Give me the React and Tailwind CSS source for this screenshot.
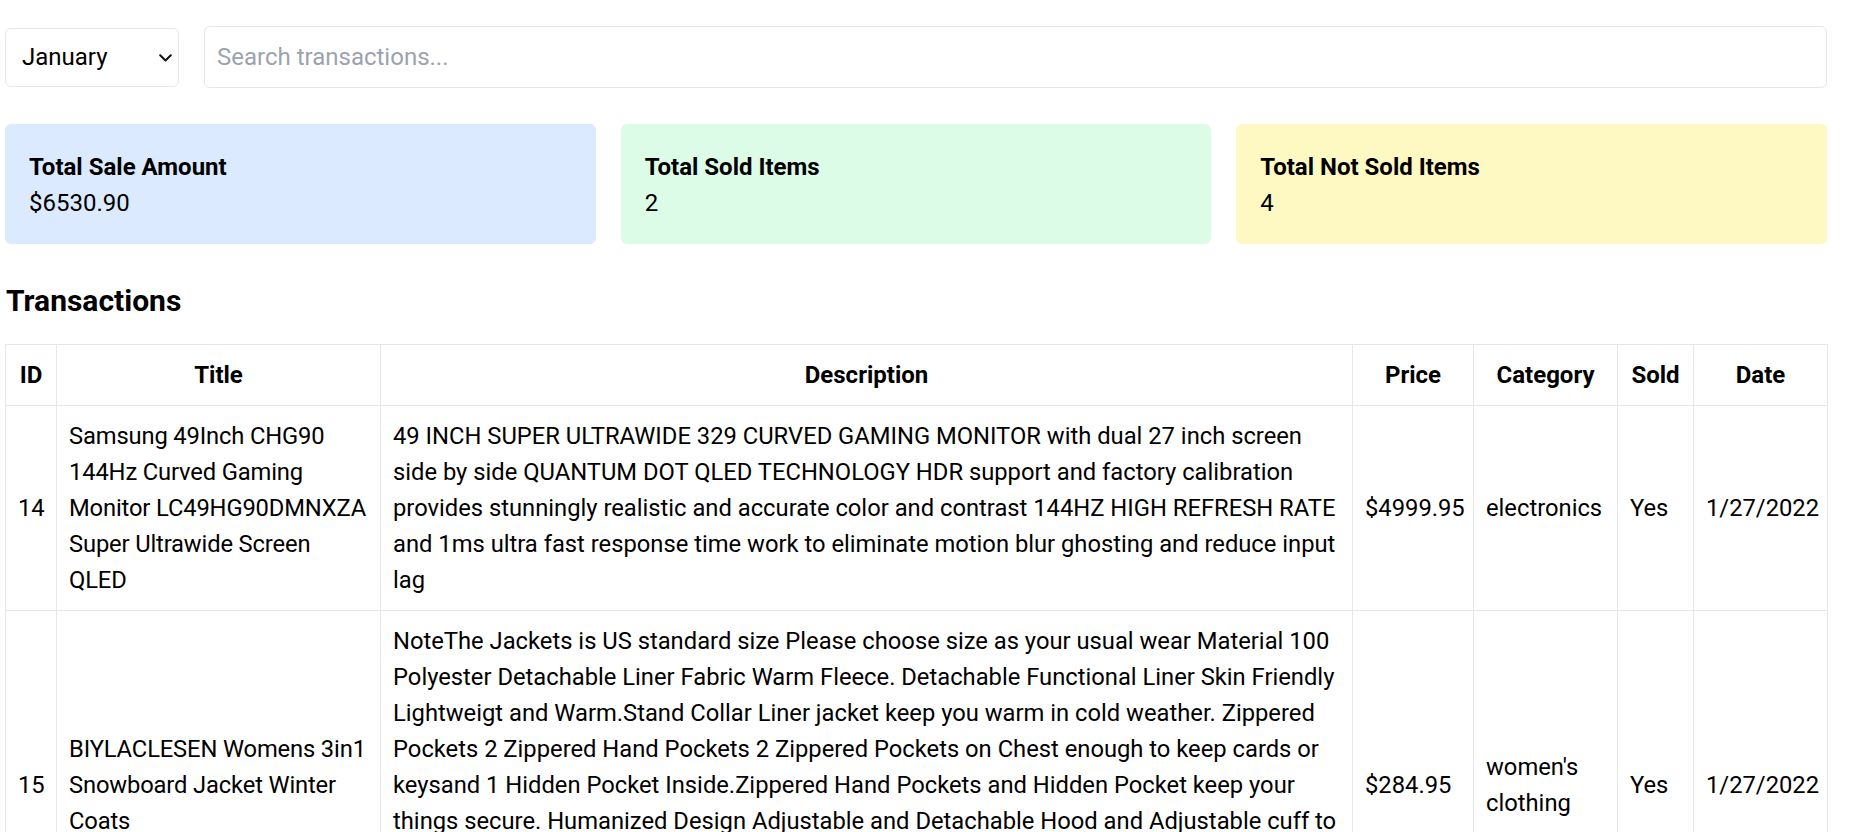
import { useState } from 'react';

const transactions = [
  {
    id: 14,
    title: 'Samsung 49Inch CHG90 144Hz Curved Gaming Monitor LC49HG90DMNXZA Super Ultrawide Screen QLED',
    description:
      '49 INCH SUPER ULTRAWIDE 329 CURVED GAMING MONITOR with dual 27 inch screen side by side QUANTUM DOT QLED TECHNOLOGY HDR support and factory calibration provides stunningly realistic and accurate color and contrast 144HZ HIGH REFRESH RATE and 1ms ultra fast response time work to eliminate motion blur ghosting and reduce input lag',
    price: 4999.95,
    category: 'electronics',
    sold: true,
    date: '1/27/2022',
  },
  {
    id: 15,
    title: 'BIYLACLESEN Womens 3in1 Snowboard Jacket Winter Coats',
    description:
      'NoteThe Jackets is US standard size Please choose size as your usual wear Material 100 Polyester Detachable Liner Fabric Warm Fleece. Detachable Functional Liner Skin Friendly Lightweigt and Warm.Stand Collar Liner jacket keep you warm in cold weather. Zippered Pockets 2 Zippered Hand Pockets 2 Zippered Pockets on Chest enough to keep cards or keysand 1 Hidden Pocket Inside.Zippered Hand Pockets and Hidden Pocket keep your things secure. Humanized Design Adjustable and Detachable Hood and Adjustable cuff to prevent the wind and water,for a comfortable fit. 3 in 1 Detachable Design provide more convenience, you can separate the coat and inner as needed, or wear it together. It is suitable for different seasons and help you adapt to different climates',
    price: 284.95,
    category: "women's clothing",
    sold: true,
    date: '1/27/2022',
  },
  {
    id: 16,
    title: "Lock and Love Women's Removable Hooded Faux Leather Moto Biker Jacket",
    description:
      '100% POLYURETHANE(shell) 100% POLYESTER(lining) 75% POLYESTER 25% COTTON (SWEATER), Faux leather material for style and comfort / 2 pockets of front, 2-For-One Hooded denim style faux leather jacket',
    price: 29.95,
    category: "women's clothing",
    sold: false,
    date: '1/27/2022',
  },
  {
    id: 17,
    title: 'Rain Jacket Women Windbreaker Striped Climbing Raincoats',
    description:
      'Lightweight perfet for trip or casual wear---Long sleeve with hooded, adjustable drawstring waist design. Button and zipper front closure raincoat, fully stripes Lined and The Raincoat has 2 side pockets are a good size to hold all kinds of things',
    price: 39.99,
    category: "women's clothing",
    sold: false,
    date: '1/27/2022',
  },
];

const cards = [
  { label: 'Total Sale Amount', value: '$6530.90', bg: 'bg-[#dbeafe]' },
  { label: 'Total Sold Items', value: '2', bg: 'bg-[#dcfce7]' },
  { label: 'Total Not Sold Items', value: '4', bg: 'bg-[#fef9c3]' },
];

const columns = [
  { label: 'ID', width: 'w-[51px]' },
  { label: 'Title', width: 'w-[324px]' },
  { label: 'Description', width: 'w-[972px]' },
  { label: 'Price', width: 'w-[121px]' },
  { label: 'Category', width: 'w-[144px]' },
  { label: 'Sold', width: 'w-[76px]' },
  { label: 'Date', width: 'w-[134px]' },
];

const months = ['January', 'February', 'March', 'April', 'May', 'June', 'July', 'August', 'September', 'October', 'November', 'December'];

const cell = 'border border-[#e5e7eb] p-[12px] align-middle text-[23.75px]';

const App = () => {
  const [month, setMonth] = useState('January');
  const [search, setSearch] = useState('');

  return (
    <div className="min-h-screen bg-white pl-[5px] pr-[31px] pt-[26px] pb-10 text-[24px] leading-[36px] text-black font-['Roboto',sans-serif]">
      {/* filters */}
      <div className="flex items-center gap-[25px] mb-[36px]">
        <div className="relative w-[174px] shrink-0">
          <select
            value={month}
            onChange={(e) => setMonth(e.target.value)}
            className="w-full h-[59px] appearance-none bg-white border border-[#e5e7eb] rounded-[6px] pl-[16px] pr-[36px] text-[24px] text-black outline-none"
          >
            {months.map((m) => (
              <option key={m}>{m}</option>
            ))}
          </select>
          <svg
            className="absolute right-[7px] top-[26px] pointer-events-none"
            width="13"
            height="8"
            viewBox="0 0 13 8"
            fill="none"
          >
            <path d="M1.2 1.2 L6.5 6.5 L11.8 1.2" stroke="#111" strokeWidth="2" strokeLinecap="round" strokeLinejoin="round" />
          </svg>
        </div>
        <input
          type="text"
          value={search}
          onChange={(e) => setSearch(e.target.value)}
          placeholder="Search transactions..."
          className="flex-1 h-[62px] border border-[#e5e7eb] rounded-[6px] px-[12px] text-[24px] text-black placeholder-[#9ca3af] outline-none"
        />
      </div>

      {/* stats */}
      <div className="grid grid-cols-3 gap-[25px] mb-[36px]">
        {cards.map((card) => (
          <div key={card.label} className={`${card.bg} rounded-[6px] px-[24px] pt-[25px] pb-[23px] h-[120px]`}>
            <div className="font-bold">{card.label}</div>
            <div>{card.value}</div>
          </div>
        ))}
      </div>

      <h2 className="text-[30px] leading-[42px] font-bold mt-[2px] mb-[22px] pl-px">Transactions</h2>

      <table className="w-full table-fixed border-collapse border border-[#e5e7eb]">
        <thead>
          <tr>
            {columns.map((col) => (
              <th key={col.label} className={`${col.width} border border-[#e5e7eb] p-[12px] font-bold text-center`}>
                {col.label}
              </th>
            ))}
          </tr>
        </thead>
        <tbody>
          {transactions.map((t) => (
            <tr key={t.id}>
              <td className={cell}>{t.id}</td>
              <td className={`${cell} tracking-[-0.15px]`}>{t.title}</td>
              <td className={cell}>{t.description}</td>
              <td className={cell}>${t.price.toFixed(2)}</td>
              <td className={cell}>{t.category}</td>
              <td className={cell}>{t.sold ? 'Yes' : 'No'}</td>
              <td className={cell}>{t.date}</td>
            </tr>
          ))}
        </tbody>
      </table>
    </div>
  );
};

export default App;
